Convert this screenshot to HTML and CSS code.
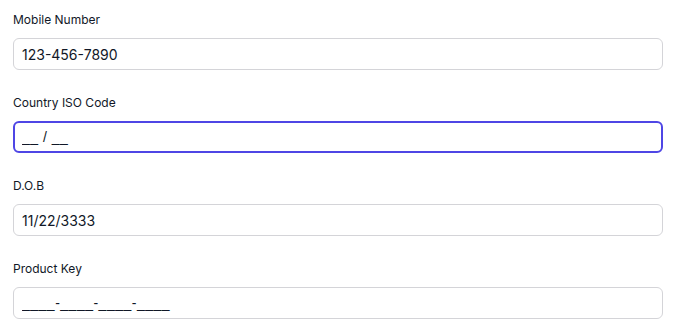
FILE: index.html
```html
<!DOCTYPE html>
<html>
<head>
<meta charset="utf-8">
<link rel="stylesheet" href="styles.css">
</head>
<body>
<form class="form">
  <div class="field">
    <label class="label">Mobile Number</label>
    <input class="input" type="text" value="123-456-7890">
  </div>
  <div class="field">
    <label class="label">Country ISO Code</label>
    <input class="input input-focus input-mask" type="text" value="__ / __">
  </div>
  <div class="field">
    <label class="label">D.O.B</label>
    <input class="input" type="text" value="11/22/3333">
  </div>
  <div class="field">
    <label class="label">Product Key</label>
    <input class="input input-mask" type="text" value="____-____-____-____">
  </div>
</form>
</body>
</html>
```
FILE: styles.css
```css
html, body {
  margin: 0;
  padding: 0;
  background: #ffffff;
}
body {
  font-family: Inter, "Liberation Sans", sans-serif;
}
.form {
  display: flex;
  flex-direction: column;
  gap: 25px;
  padding: 12px 16px 0 13px;
}
.field {
  display: flex;
  flex-direction: column;
  gap: 10px;
}
.label {
  font-size: 12px;
  line-height: 16px;
  font-weight: 400;
  color: #111827;
}
.input {
  box-sizing: border-box;
  height: 32px;
  width: 100%;
  margin: 0;
  padding: 0 8px;
  border: 1px solid #d4d4d8;
  border-radius: 6px;
  font-family: Inter, "Liberation Sans", sans-serif;
  font-size: 14px;
  color: #111827;
  background: #ffffff;
  outline: none;
}
.input-mask {
  font-family: "Liberation Sans", Inter, sans-serif;
  letter-spacing: 0.5px;
}
.input-focus {
  border: 2px solid #4f46e5;
  padding: 0 7px;
}
```
